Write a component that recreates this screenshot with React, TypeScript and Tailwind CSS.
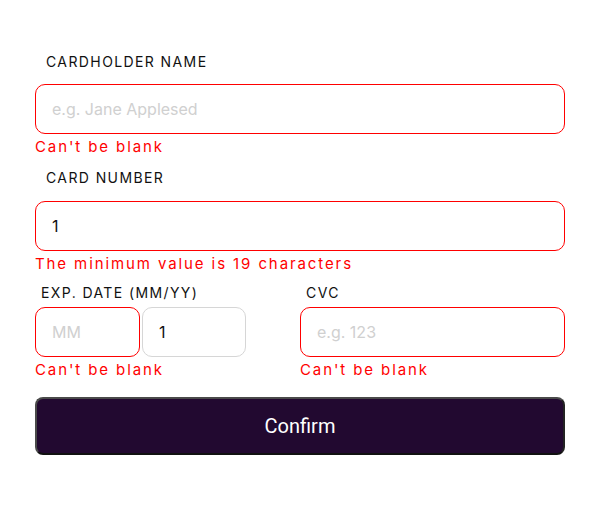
import React from 'react'

const font = { fontFamily: 'Inter, "Noto Sans", sans-serif' }

function FieldInput({ placeholder, value, error = true, className = '' }: { placeholder: string; value?: string; error?: boolean; className?: string }) {
  return (
    <input
      readOnly
      placeholder={placeholder}
      value={value ?? ''}
      className={`h-[50px] rounded-[10px] border bg-white px-4 text-[16px] text-[#111] placeholder:text-[#d0d0d0] outline-none ${error ? 'border-[#ff0000]' : 'border-[#d6d6d6]'} ${className}`}
    />
  )
}

function ErrorText({ children }: { children: React.ReactNode }) {
  return <p className="mt-[3px] h-5 whitespace-nowrap text-[15px] leading-5 tracking-[1.9px] text-[#ff0000]">{children}</p>
}

export default function App() {
  return (
    <div className="h-[505px] w-[614px] bg-white" style={font}>
      <form className="flex w-[565px] flex-col pl-[35px] pt-[52px]" onSubmit={(e) => e.preventDefault()}>
        <label className="ml-[11px] h-5 text-[14px] leading-5 tracking-[1.4px] text-[#111]">CARDHOLDER NAME</label>
        <FieldInput placeholder="e.g. Jane Applesed" className="mt-[12px] w-full" />
        <ErrorText>Can't be blank</ErrorText>

        <label className="ml-[11px] mt-[11px] h-5 text-[14px] leading-5 tracking-[1.4px] text-[#111]">CARD NUMBER</label>
        <FieldInput placeholder="e.g. 1234 5678 9123 0000" value="1" className="mt-[13px] w-full" />
        <ErrorText>The minimum value is 19 characters</ErrorText>

        <div className="mt-[9px] grid grid-cols-[211px_1fr] gap-x-[54px]">
          <div className="flex flex-col">
            <label className="ml-[6px] h-5 text-[14px] leading-5 tracking-[1.4px] text-[#111]">EXP. DATE (MM/YY)</label>
            <div className="mt-[4px] flex gap-[2px]">
              <FieldInput placeholder="MM" className="w-[105px] min-w-0" />
              <FieldInput placeholder="YY" value="1" error={false} className="w-[104px] min-w-0" />
            </div>
            <ErrorText>Can't be blank</ErrorText>
          </div>
          <div className="flex flex-col">
            <label className="ml-[6px] h-5 text-[14px] leading-5 tracking-[1.4px] text-[#111]">CVC</label>
            <FieldInput placeholder="e.g. 123" className="mt-[4px] w-full min-w-0" />
            <ErrorText>Can't be blank</ErrorText>
          </div>
        </div>

        <button
          type="submit"
          className="mt-[17px] h-[58px] w-full rounded-[8px] border-2 border-[#4a4a4a] border-b-[#111] border-r-[#222] bg-[#220930] text-[20px] text-white"
          style={{ fontFamily: 'Roboto, "Noto Sans", sans-serif' }}
        >
          Confirm
        </button>
      </form>
    </div>
  )
}
